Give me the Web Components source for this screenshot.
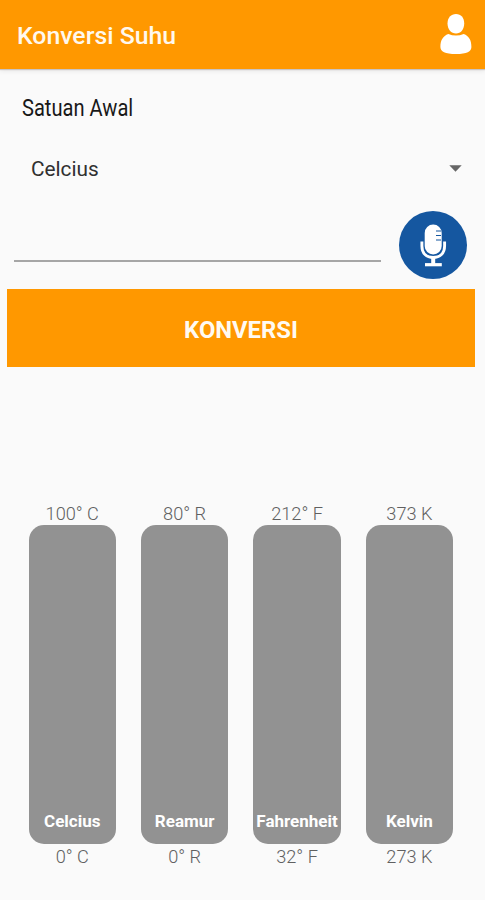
<!DOCTYPE html>
<html lang="id">
<head>
<meta charset="utf-8">
<title>Konversi Suhu</title>
<style>
  body {
    margin: 0;
    background: #fafafa;
    font-family: Roboto, "Liberation Sans", sans-serif;
  }
</style>
</head>
<body>
<temp-app></temp-app>

<script>
// Orange app bar with the title and an action slot
class TempHeader extends HTMLElement {

  get template() {
    let t = document.createElement("template");
    t.innerHTML = `
    <style>
      :host {
        display: flex;
        align-items: center;
        justify-content: space-between;
        box-sizing: border-box;
        height: 69px;
        padding: 3px 13px 0 17px;
        background: #ff9800;
        color: #fff8ee;
        box-shadow: 0 1px 1px #c9c4c4, 0 2px 5px rgba(0, 0, 0, 0.08);
      }

      h1 {
        margin: 0;
        font-size: 24.8px;
        line-height: 30px;
        font-weight: 500;
        white-space: nowrap;
      }
    </style>

    <h1><slot></slot></h1>
    <slot name="action"></slot>
    `;
    return t;
  }

  constructor() {
    super();
    this.attachShadow({ mode: "open" });
    this.shadowRoot.append(this.template.content.cloneNode(true));
  }
}

customElements.define("temp-header", TempHeader);

// Profile icon
class UserIcon extends HTMLElement {

  get template() {
    let t = document.createElement("template");
    t.innerHTML = `
    <style>
      :host { display: block; width: 32px; height: 42px; margin-top: -4px; }
      svg { display: block; }
    </style>

    <svg width="32" height="42" viewBox="0 0 32 42" fill="#fff">
      <path d="M16 1C21 1 24.2 4.6 24.2 10.5S20.8 20.5 16 20.5 7.5 16.4 7.5 10.5 11 1 16 1Z"/>
      <path d="M8.3 21Q16 24.2 23.7 21C29 23 31.4 27 31.4 34C31.4 38.5 27 41 16 41S0.4 38.5 0.4 34C0.4 27 3 23 8.3 21Z"/>
    </svg>
    `;
    return t;
  }

  constructor() {
    super();
    this.attachShadow({ mode: "open" });
    this.shadowRoot.append(this.template.content.cloneNode(true));
  }
}

customElements.define("user-icon", UserIcon);

// Unit picker with a drop-down arrow
class UnitSelect extends HTMLElement {

  get template() {
    let t = document.createElement("template");
    t.innerHTML = `
    <style>
      :host {
        display: flex;
        align-items: center;
        justify-content: space-between;
        height: 30px;
        padding: 0 23px 0 31px;
        font-size: 20.8px;
        line-height: 30px;
        color: #303030;
      }

      span { padding-top: 1px; }
      svg { display: block; }
    </style>

    <span><slot></slot></span>
    <svg width="13" height="7" viewBox="0 0 13 7"><path d="M0.3 0.3H12.7L6.5 6.7Z" fill="#666"/></svg>
    `;
    return t;
  }

  constructor() {
    super();
    this.attachShadow({ mode: "open" });
    this.shadowRoot.append(this.template.content.cloneNode(true));
  }
}

customElements.define("unit-select", UnitSelect);

// Round voice input button
class MicButton extends HTMLElement {

  get template() {
    let t = document.createElement("template");
    t.innerHTML = `
    <style>
      :host { display: block; width: 68px; height: 68px; }
      svg { display: block; }
    </style>

    <svg width="68" height="68" viewBox="0 0 68 68" fill="none">
      <circle cx="34" cy="34" r="34" fill="#1557a0"/>
      <rect x="25.7" y="13.5" width="17" height="30" rx="8.5" fill="#fff"/>
      <path d="M37 20H42M37 24.5H42M37 29H42" stroke="#1557a0" stroke-width="1.1"/>
      <path d="M22.9 30.5V35C22.9 42.5 27.5 46.5 34.2 46.5S45.6 42.5 45.6 35V30.5" stroke="#fff" stroke-width="2.9"/>
      <path d="M34.2 46V53" stroke="#fff" stroke-width="4"/>
      <path d="M26 53.7H42.8" stroke="#fff" stroke-width="3.2"/>
    </svg>
    `;
    return t;
  }

  constructor() {
    super();
    this.attachShadow({ mode: "open" });
    this.shadowRoot.append(this.template.content.cloneNode(true));
  }
}

customElements.define("mic-button", MicButton);

// One scale: upper limit, bar with its name, lower limit
class TempBar extends HTMLElement {

  get template() {
    let t = document.createElement("template");
    t.innerHTML = `
    <style>
      :host {
        display: flex;
        flex-direction: column;
        align-items: stretch;
        text-align: center;
        white-space: nowrap;
        font-size: 18.2px;
        font-weight: 300;
        line-height: 22px;
        color: #606060;
      }

      .bar {
        display: flex;
        align-items: flex-end;
        justify-content: center;
        box-sizing: border-box;
        height: 319px;
        padding-bottom: 12px;
        border-radius: 15px;
        background: #929292;
        color: #fff;
        font-size: 17px;
        font-weight: 700;
      }

      .low { margin-top: 2px; }
    </style>

    <div><slot name="high"></slot></div>
    <div class="bar"><span><slot></slot></span></div>
    <div class="low"><slot name="low"></slot></div>
    `;
    return t;
  }

  constructor() {
    super();
    this.attachShadow({ mode: "open" });
    this.shadowRoot.append(this.template.content.cloneNode(true));
  }
}

customElements.define("temp-bar", TempBar);

// The whole screen
class TempApp extends HTMLElement {

  get template() {
    let t = document.createElement("template");
    t.innerHTML = `
    <style>
      :host {
        display: flex;
        flex-direction: column;
        width: 485px;
        height: 900px;
        overflow: hidden;
      }

      .label {
        width: max-content;
        margin: 24px 0 0 22px;
        font-size: 23.5px;
        line-height: 30px;
        color: #181818;
        transform: scaleX(0.855);
        transform-origin: 0 50%;
      }

      unit-select { margin-top: 30px; }

      .entry {
        display: flex;
        align-items: flex-start;
        gap: 18px;
        margin: 28px 18px 0 14px;
      }

      .field {
        flex: 1;
        height: 49px;
        border-bottom: 2px solid #a6a6a6;
      }

      button {
        height: 78px;
        margin: 10px 10px 0 7px;
        padding: 3px 0 0;
        border: 0;
        background: #ff9800;
        color: #fffaf2;
        font: 700 23.8px/30px Roboto, "Liberation Sans", sans-serif;
      }

      .bars {
        display: grid;
        grid-template-columns: repeat(4, 87.5px);
        gap: 24.9px;
        margin: 136px 0 0 28.5px;
      }
    </style>

    <temp-header>Konversi Suhu<user-icon slot="action"></user-icon></temp-header>
    <div class="label">Satuan Awal</div>
    <unit-select>Celcius</unit-select>
    <div class="entry">
      <div class="field"></div>
      <mic-button></mic-button>
    </div>
    <button>KONVERSI</button>
    <div class="bars">
      <temp-bar><span slot="high">100° C</span>Celcius<span slot="low">0° C</span></temp-bar>
      <temp-bar><span slot="high">80° R</span>Reamur<span slot="low">0° R</span></temp-bar>
      <temp-bar><span slot="high">212° F</span>Fahrenheit<span slot="low">32° F</span></temp-bar>
      <temp-bar><span slot="high">373 K</span>Kelvin<span slot="low">273 K</span></temp-bar>
    </div>
    `;
    return t;
  }

  constructor() {
    super();
    this.attachShadow({ mode: "open" });
    this.shadowRoot.append(this.template.content.cloneNode(true));
  }
}

customElements.define("temp-app", TempApp);
</script>
</body>
</html>
